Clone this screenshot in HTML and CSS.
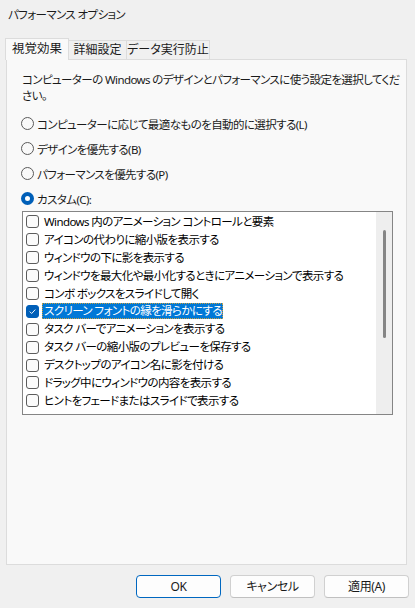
FILE: index.html
```html
<!DOCTYPE html>
<html lang="ja">
<head>
<meta charset="utf-8">
<title>パフォーマンス オプション</title>
<link rel="stylesheet" href="styles.css">
</head>
<body>
<div class="dialog">
  <div class="titlebar">パフォーマンス オプション</div>
  <div class="tabs">
    <div class="tab tab-active">視覚効果</div>
    <div class="tab tab-2">詳細設定</div>
    <div class="tab tab-3">データ実行防止</div>
  </div>
  <div class="panel">
    <p class="desc"><span class="line">コンピューターの Windows のデザインとパフォーマンスに使う設定を選択してくだ</span><span class="line">さい。</span></p>
    <div class="radios">
      <div class="radio-row"><span class="radio"></span><span>コンピューターに応じて最適なものを自動的に選択する(L)</span></div>
      <div class="radio-row"><span class="radio"></span><span>デザインを優先する(B)</span></div>
      <div class="radio-row"><span class="radio"></span><span>パフォーマンスを優先する(P)</span></div>
      <div class="radio-row"><span class="radio radio-on"></span><span>カスタム(C):</span></div>
    </div>
    <div class="listbox">
      <div class="items">
        <div class="item"><span class="cb"></span><span class="label">Windows 内のアニメーション コントロールと要素</span></div>
        <div class="item"><span class="cb"></span><span class="label">アイコンの代わりに縮小版を表示する</span></div>
        <div class="item"><span class="cb"></span><span class="label">ウィンドウの下に影を表示する</span></div>
        <div class="item"><span class="cb"></span><span class="label">ウィンドウを最大化や最小化するときにアニメーションで表示する</span></div>
        <div class="item"><span class="cb"></span><span class="label">コンボ ボックスをスライドして開く</span></div>
        <div class="item"><span class="cb cb-on"><svg viewBox="0 0 13 13" width="13" height="13"><path d="M3.2 6.6 L5.5 8.9 L9.8 4.2" fill="none" stroke="#ffffff" stroke-width="1.1"/></svg></span><span class="label label-sel">スクリーン フォントの縁を滑らかにする</span></div>
        <div class="item"><span class="cb"></span><span class="label">タスク バーでアニメーションを表示する</span></div>
        <div class="item"><span class="cb"></span><span class="label">タスク バーの縮小版のプレビューを保存する</span></div>
        <div class="item"><span class="cb"></span><span class="label">デスクトップのアイコン名に影を付ける</span></div>
        <div class="item"><span class="cb"></span><span class="label">ドラッグ中にウィンドウの内容を表示する</span></div>
        <div class="item"><span class="cb"></span><span class="label">ヒントをフェードまたはスライドで表示する</span></div>
      </div>
      <div class="scrollbar"><div class="thumb"></div></div>
    </div>
  </div>
  <div class="buttons">
    <button class="btn btn-default">OK</button>
    <button class="btn">キャンセル</button>
    <button class="btn">適用(A)</button>
  </div>
</div>
</body>
</html>
```

FILE: styles.css
```css
* { box-sizing: border-box; }
html, body {
  margin: 0;
  padding: 0;
  background: #f0f0f0;
}
body {
  font-family: "Noto Sans", "Noto Sans CJK JP", sans-serif;
  font-size: 11.5px;
  letter-spacing: -0.6px;
  font-feature-settings: "palt";
  color: #1a1a1a;
  width: 415px;
  height: 608px;
  overflow: hidden;
}
.dialog {
  display: flex;
  flex-direction: column;
  height: 608px;
}
.titlebar {
  height: 30px;
  line-height: 30px;
  padding-left: 8px;
  color: #1a1a1a;
}
.tabs {
  display: flex;
  align-items: flex-end;
  height: 21px;
  margin-top: 8px;
  padding-left: 5px;
}
.tab {
  height: 19px;
  line-height: 18px;
  text-align: center;
  border: 1px solid #dcdcdc;
  border-bottom: none;
  background: #f0f0f0;
  color: #1a1a1a;
  font-size: 12px;
  letter-spacing: 0;
}
.tab-active {
  width: 64px;
  height: 22px;
  line-height: 20px;
  margin-bottom: -1px;
  background: #f9f9f9;
  position: relative;
  z-index: 1;
  font-size: 12.5px;
}
.tab-2 {
  width: 58px;
  border-left: none;
}
.tab-3 {
  width: 84px;
  border-left: 1px solid #dcdcdc;
  margin-left: -1px;
}
.panel {
  margin: 0 8px 0 6px;
  height: 506px;
  background: #f9f9f9;
  border: 1px solid #dcdcdc;
  padding: 12px 13px 0 15px;
}
.desc {
  margin: 0 0 7px 0;
  line-height: 16px;
}
.line {
  display: block;
  white-space: nowrap;
}
.radios {
  display: flex;
  flex-direction: column;
}
.radio-row {
  display: flex;
  align-items: center;
  height: 25px;
  gap: 3px;
  margin-left: -1px;
}
.radio {
  width: 13px;
  height: 13px;
  border-radius: 50%;
  border: 1px solid #5a5a5a;
  background: #f9f9f9;
  flex: none;
}
.radio-on {
  border: 4px solid #005fb8;
  background: #ffffff;
}
.listbox {
  display: flex;
  height: 204px;
  border: 1px solid #858585;
  background: #ffffff;
  overflow: hidden;
}
.items {
  flex: 1;
  padding: 1px 0 0 3px;
  overflow: hidden;
}
.item {
  display: flex;
  align-items: center;
  height: 17.9px;
  gap: 3px;
  white-space: nowrap;
  color: #000;
}
.cb {
  width: 13px;
  height: 13px;
  border: 1px solid #5c5c5c;
  border-radius: 3px;
  background: #fbfbfb;
  flex: none;
  display: flex;
  align-items: center;
  justify-content: center;
}
.cb-on {
  background: #005fb8;
  border-color: #005fb8;
}
.cb-on svg { display: block; }
.label {
  line-height: 16px;
  padding: 0 1px 0 2px;
}
.label-sel {
  background: #0078d7;
  color: #ffffff;
  outline: 1px dotted #c8a040;
  outline-offset: -1px;
}
.scrollbar {
  width: 16px;
  flex: none;
  background: #eeeeee;
  display: flex;
  justify-content: center;
  padding-top: 18px;
}
.thumb {
  width: 3px;
  height: 108px;
  border-radius: 2px;
  background: #858585;
}
.buttons {
  display: flex;
  justify-content: flex-end;
  gap: 9px;
  padding: 10px 6px 0 0;
}
.btn {
  width: 85px;
  height: 23px;
  border: 1px solid #d0d0d0;
  border-bottom-color: #c0c0c0;
  border-radius: 4px;
  background: #fdfdfd;
  font-family: "Noto Sans", "Noto Sans CJK JP", sans-serif;
  font-size: 12px;
  letter-spacing: -0.4px;
  font-feature-settings: "palt";
  color: #1a1a1a;
  padding: 0;
  line-height: 20px;
}
.btn-default {
  border: 1px solid #0067c0;
}
```
